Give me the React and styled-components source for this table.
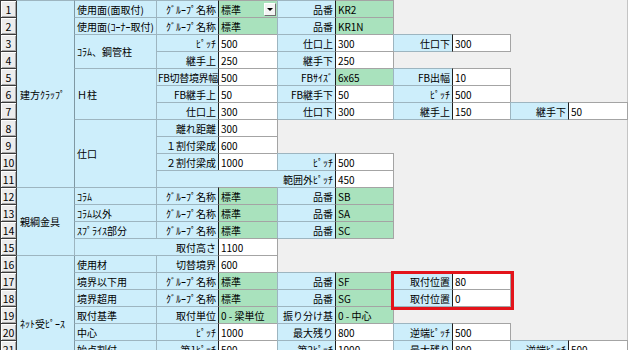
import React from "react";
import styled, { createGlobalStyle } from "styled-components";

const GlobalStyle = createGlobalStyle`
  html, body {
    margin: 0;
    padding: 0;
    background: #f0f0f0;
    overflow: hidden;
  }
  body {
    font-family: "Noto Sans CJK JP", "Noto Sans", sans-serif;
  }
`;

const COLS = [16, 58, 82, 62, 59, 58, 58, 59, 58, 58, 59];

const sections = [
  { row: 1, rows: 11, text: "建方ｸﾗｯﾌﾟ" },
  { row: 12, rows: 4, text: "親綱金具" },
  { row: 16, rows: 8, text: "ﾈｯﾄ受ﾋﾟｰｽ" },
];

const subs = [
  { row: 1, text: "使用面(面取付)" },
  { row: 2, text: "使用面(ｺｰﾅｰ取付)" },
  { row: 3, rows: 2, text: "ｺﾗﾑ、鋼管柱" },
  { row: 5, rows: 3, text: "Ｈ柱" },
  { row: 8, rows: 4, text: "仕口" },
  { row: 12, text: "ｺﾗﾑ" },
  { row: 13, text: "ｺﾗﾑ以外" },
  { row: 14, text: "ｽﾌﾟﾗｲｽ部分" },
  { row: 16, text: "使用材" },
  { row: 17, text: "境界以下用" },
  { row: 18, text: "境界超用" },
  { row: 19, text: "取付基準" },
  { row: 20, text: "中心" },
  { row: 21, text: "始点割付" },
  { row: 22, text: "" },
  { row: 23, text: "" },
];

// each field: [label, value, kind] — kind "g" = green select, "combo" = select with button
const rows = [
  { n: 1, fields: [["ｸﾞﾙｰﾌﾟ名称", "標準", "combo"], ["品番", "KR2", "g"]] },
  { n: 2, fields: [["ｸﾞﾙｰﾌﾟ名称", "標準", "g"], ["品番", "KR1N", "g"]] },
  { n: 3, fields: [["ﾋﾟｯﾁ", "500"], ["仕口上", "300"], ["仕口下", "300"]] },
  { n: 4, fields: [["継手上", "250"], ["継手下", "250"]] },
  { n: 5, fields: [["FB切替境界幅", "500"], ["FBｻｲｽﾞ", "6x65", "g"], ["FB出幅", "10"]] },
  { n: 6, fields: [["FB継手上", "50"], ["FB継手下", "50"], ["ﾋﾟｯﾁ", "500"]] },
  { n: 7, fields: [["仕口上", "300"], ["仕口下", "300"], ["継手上", "150"], ["継手下", "50"]] },
  { n: 8, fields: [["離れ距離", "300"]] },
  { n: 9, fields: [["１割付梁成", "600"]] },
  { n: 10, fields: [["２割付梁成", "1000"], ["ﾋﾟｯﾁ", "500"]] },
  { n: 11, labelSpan: 3, fields: [["範囲外ﾋﾟｯﾁ", "450"]] },
  { n: 12, fields: [["ｸﾞﾙｰﾌﾟ名称", "標準", "g"], ["品番", "SB", "g"]] },
  { n: 13, fields: [["ｸﾞﾙｰﾌﾟ名称", "標準", "g"], ["品番", "SA", "g"]] },
  { n: 14, fields: [["ｸﾞﾙｰﾌﾟ名称", "標準", "g"], ["品番", "SC", "g"]] },
  { n: 15, start: 3, labelSpan: 2, fields: [["取付高さ", "1100"]] },
  { n: 16, fields: [["切替境界", "600"]] },
  { n: 17, fields: [["ｸﾞﾙｰﾌﾟ名称", "標準", "g"], ["品番", "SF", "g"], ["取付位置", "80"]] },
  { n: 18, fields: [["ｸﾞﾙｰﾌﾟ名称", "標準", "g"], ["品番", "SG", "g"], ["取付位置", "0"]] },
  { n: 19, fields: [["取付単位", "0 - 梁単位", "g"], ["振り分け基", "0 - 中心", "g"]] },
  { n: 20, fields: [["ﾋﾟｯﾁ", "1000"], ["最大残り", "800"], ["逆端ﾋﾟｯﾁ", "500"]] },
  { n: 21, fields: [["第1ﾋﾟｯﾁ", "500"], ["第2ﾋﾟｯﾁ", "1000"], ["最大残り", "800"], ["逆端ﾋﾟｯﾁ", "500"]] },
  { n: 22, fields: [] },
  { n: 23, fields: [] },
];

// rough width in em: half-width (ascii / hankaku kana) counts 0.5
const emWidth = (s) =>
  [...s].reduce((w, ch) => {
    const c = ch.charCodeAt(0);
    return w + (c < 0x100 || (c >= 0xff61 && c <= 0xff9f) ? 0.5 : 1);
  }, 0);

const Sheet = styled.div`
  position: relative;
  width: 628px;
  height: 350px;
  overflow: hidden;
  background: #f0f0f0;
  box-shadow: inset -1px 0 #c4c4c4;
`;

const Grid = styled.div`
  display: grid;
  grid-template-columns: ${COLS.map((w) => `${w}px`).join(" ")};
  grid-auto-rows: 17px;
  padding: 1px 0 0 1px;
  font-size: 10px;
  color: #000;
`;

const Cell = styled.div`
  grid-column: ${(p) => p.$col} / span ${(p) => p.$span || 1};
  grid-row: ${(p) => p.$row} / span ${(p) => p.$rows || 1};
  margin: -1px 0 0 -1px;
  box-sizing: border-box;
  display: flex;
  align-items: center;
  overflow: hidden;
  white-space: nowrap;
  border: 1px solid #9db5c0;
`;

const RowNum = styled(Cell)`
  justify-content: center;
  font-size: 10.5px;
  background: #ececec;
  border-color: #3a3a3a;
  box-shadow: inset 1px 1px #ffffff, inset -1px -1px #a8a8a8;
`;

const Section = styled(Cell)`
  padding-left: 3px;
  background: #cdeefb;
  border-left-color: #3a3a3a;
`;

const Sub = styled(Cell)`
  padding-left: 2px;
  background: #cdeefb;
  border-left-color: #7f98a3;
`;

const Label = styled(Cell)`
  justify-content: flex-end;
  padding-right: ${(p) => (p.$tight ? 0 : 2)}px;
  letter-spacing: ${(p) => (p.$tight ? "-0.3px" : "normal")};
  background: #cdeefb;
`;

const Value = styled(Cell)`
  padding-left: 2px;
  background: ${(p) => (p.$green ? "#a9e2bd" : "#ffffff")};
  border-color: #a4a4a4;
  border-left-color: #1e1e1e;
`;

const ComboButton = styled.span`
  margin-left: auto;
  margin-right: 1px;
  width: 12px;
  height: 13px;
  box-sizing: border-box;
  display: flex;
  align-items: center;
  justify-content: center;
  background: #f4f4f4;
  border: 1px solid;
  border-color: #ffffff #6f6f6f #6f6f6f #ffffff;

  &::after {
    content: "";
    border-left: 3px solid transparent;
    border-right: 3px solid transparent;
    border-top: 3px solid #000;
  }
`;

const Highlight = styled.div`
  position: absolute;
  left: 391px;
  top: 271px;
  width: 123px;
  height: 39px;
  box-sizing: border-box;
  border: 3px solid #e3141b;
  pointer-events: none;
`;

const Fields = ({ row }) => {
  let col = row.start || 4;
  return row.fields.map(([label, value, kind], i) => {
    const span = i === 0 ? row.labelSpan || 1 : 1;
    const labelCol = col;
    col += span + 1;
    return (
      <React.Fragment key={i}>
        <Label
          $row={row.n}
          $col={labelCol}
          $span={span}
          $tight={span === 1 && emWidth(label) > 5.5}
        >
          {label}
        </Label>
        <Value $row={row.n} $col={labelCol + span} $green={!!kind}>
          {value}
          {kind === "combo" && <ComboButton />}
        </Value>
      </React.Fragment>
    );
  });
};

const App = () => {
  return (
    <>
      <GlobalStyle />
      <Sheet>
        <Grid>
          {rows.map((r) => (
            <RowNum key={`n${r.n}`} $row={r.n} $col={1}>
              {r.n}
            </RowNum>
          ))}
          {sections.map((s) => (
            <Section key={`s${s.row}`} $row={s.row} $rows={s.rows} $col={2}>
              {s.text}
            </Section>
          ))}
          {subs.map((s) => (
            <Sub key={`b${s.row}`} $row={s.row} $rows={s.rows} $col={3}>
              {s.text}
            </Sub>
          ))}
          {rows.map((r) => (
            <Fields key={`f${r.n}`} row={r} />
          ))}
        </Grid>
        <Highlight />
      </Sheet>
    </>
  );
};

export default App;
